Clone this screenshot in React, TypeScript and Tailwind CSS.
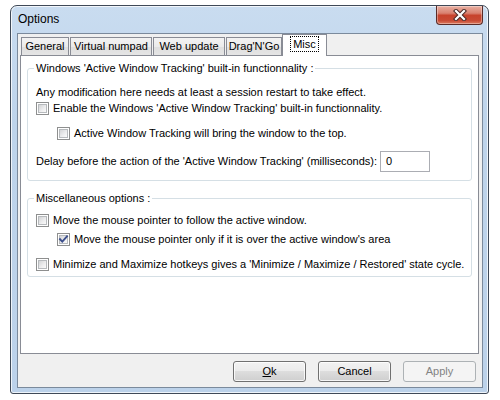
import React from "react";

function Box({ checked }: { checked?: boolean }) {
  return (
    <span className="relative flex h-[13px] w-[13px] shrink-0 border border-[#8e8f8f] bg-white p-[1px]">
      <span className="flex-1 border border-[#b7babd] bg-[linear-gradient(135deg,#d3d4d6,#eeeeef_60%,#fafafa)]" />
      {checked && (
        <svg className="absolute left-0 top-0" width="11" height="11" viewBox="0 0 11 11">
          <path d="M2 5.2 L4.3 7.6 L9 2.4" fill="none" stroke="#3c4f8c" strokeWidth="1.9" strokeLinecap="square" />
        </svg>
      )}
    </span>
  );
}

function Check({ label, checked, indent }: { label: string; checked?: boolean; indent?: boolean }) {
  return (
    <div className={`flex h-[14px] items-center gap-[4px] ${indent ? "pl-[21px]" : ""}`}>
      <Box checked={checked} />
      <span className="whitespace-nowrap leading-[14px]">{label}</span>
    </div>
  );
}

function Tab({ label, w }: { label: string; w: string }) {
  return (
    <div
      className={`flex h-[18px] items-center justify-center border border-b-0 border-[#898c95] bg-[linear-gradient(#f3f3f3,#ebebeb_50%,#dedede_51%,#e5e5e5)] ${w}`}
    >
      {label}
    </div>
  );
}

function Btn({ children, disabled }: { children: React.ReactNode; disabled?: boolean }) {
  return (
    <div
      className={
        disabled
          ? "flex h-[21px] w-[73px] items-center justify-center rounded-[3px] border border-[#adb2b5] bg-[#f4f4f4] text-[#838383]"
          : "flex h-[21px] w-[73px] items-center justify-center rounded-[3px] border border-[#707070] bg-[linear-gradient(#f2f2f2,#ebebeb_48%,#dddddd_50%,#cfcfcf)] shadow-[inset_0_0_0_1px_rgba(255,255,255,0.8)]"
      }
    >
      {children}
    </div>
  );
}

export default function App() {
  return (
    <div className="h-[400px] w-[500px] bg-white pl-[10px] pt-[5px] font-['Liberation_Sans',Arial,sans-serif] text-[11px] text-black">
      <div className="flex h-[389px] w-[479px] flex-col rounded-t-[7px] rounded-b-[3px] border border-[#3f4957] bg-[linear-gradient(#c9dcf0,#bed4eb_30%,#bcd2ea)] shadow-[inset_0_0_0_1px_rgba(255,255,255,0.75)]">
        <div className="flex h-[27px] shrink-0 items-start justify-between">
          <div className="pl-[7px] pt-[6px] text-[12px] leading-[15px]">Options</div>
          <div className="mr-[5px] flex h-[19px] w-[47px] items-center justify-center rounded-b-[4px] border border-t-0 border-[#5a2b27] bg-[linear-gradient(#e8b0a2,#d98170_40%,#c7432d_52%,#c84a34_80%,#dc7a5e)] shadow-[inset_0_0_0_1px_rgba(255,255,255,0.35)]">
            <svg width="14" height="12" viewBox="0 0 14 12">
              <path d="M3 2 L11 10 M11 2 L3 10" fill="none" stroke="#4a2a28" strokeWidth="4.2" strokeLinecap="square" />
              <path d="M3 2 L11 10 M11 2 L3 10" fill="none" stroke="#ffffff" strokeWidth="2.2" strokeLinecap="square" />
            </svg>
          </div>
        </div>
        <div className="mb-[5px] ml-[6px] mr-[5px] flex h-[355px] flex-col border border-[#7b8a9c] bg-[#f0f0f0]">
          <div className="flex h-[21px] items-end pl-[3px]">
            <Tab label="General" w="w-[48px]" />
            <div className="w-[1px]" />
            <Tab label="Virtual numpad" w="w-[82px]" />
            <div className="w-[1px]" />
            <Tab label="Web update" w="w-[72px]" />
            <div className="w-[1px]" />
            <Tab label="Drag'N'Go" w="w-[56px]" />
            <div className="relative z-10 -mb-[1px] flex h-[22px] w-[45px] items-start justify-center border border-b-0 border-[#898c95] bg-white pt-[1px]">
              <span className="border border-dotted border-black px-[2px] leading-[14px]">Misc</span>
            </div>
          </div>
          <div className="ml-[2px] mr-[3px] flex h-[299px] flex-col border border-[#898c95] bg-white">
            <fieldset className="mx-[6px] mt-[5px] rounded-[3px] border border-[#d5dfe5] pb-[8px]">
              <legend className="ml-[6px] px-[2px] leading-[14px]">
                Windows 'Active Window Tracking' built-in functionnality :
              </legend>
              <div className="pl-[8px]">
                <div className="mt-[10px] leading-[14px]">
                  Any modification here needs at least a session restart to take effect.
                </div>
                <div className="mt-[2px]">
                  <Check label="Enable the Windows 'Active Window Tracking' built-in functionnality." />
                </div>
                <div className="mt-[11px]">
                  <Check indent label="Active Window Tracking will bring the window to the top." />
                </div>
                <div className="mt-[11px] flex h-[21px] items-center gap-[3px]">
                  <span className="whitespace-nowrap">
                    Delay before the action of the 'Active Window Tracking' (milliseconds):
                  </span>
                  <div className="flex h-[21px] w-[50px] items-center border border-[#abadb3] bg-white pl-[5px]">0</div>
                </div>
              </div>
            </fieldset>
            <fieldset className="mx-[6px] mt-[10px] rounded-[3px] border border-[#d5dfe5] pb-[5px]">
              <legend className="ml-[6px] px-[2px] leading-[14px]">Miscellaneous options :</legend>
              <div className="pl-[8px]">
                <div className="mt-[8px]">
                  <Check label="Move the mouse pointer to follow the active window." />
                </div>
                <div className="mt-[5px]">
                  <Check indent checked label="Move the mouse pointer only if it is over the active window's area" />
                </div>
                <div className="mt-[11px]">
                  <Check label="Minimize and Maximize hotkeys gives a 'Minimize / Maximize / Restored' state cycle." />
                </div>
              </div>
            </fieldset>
          </div>
          <div className="mt-[7px] flex justify-end gap-[12px] pr-[6px]">
            <Btn>
              <span className="underline underline-offset-[1px]">O</span>k
            </Btn>
            <Btn>Cancel</Btn>
            <Btn disabled>Apply</Btn>
          </div>
        </div>
      </div>
    </div>
  );
}
